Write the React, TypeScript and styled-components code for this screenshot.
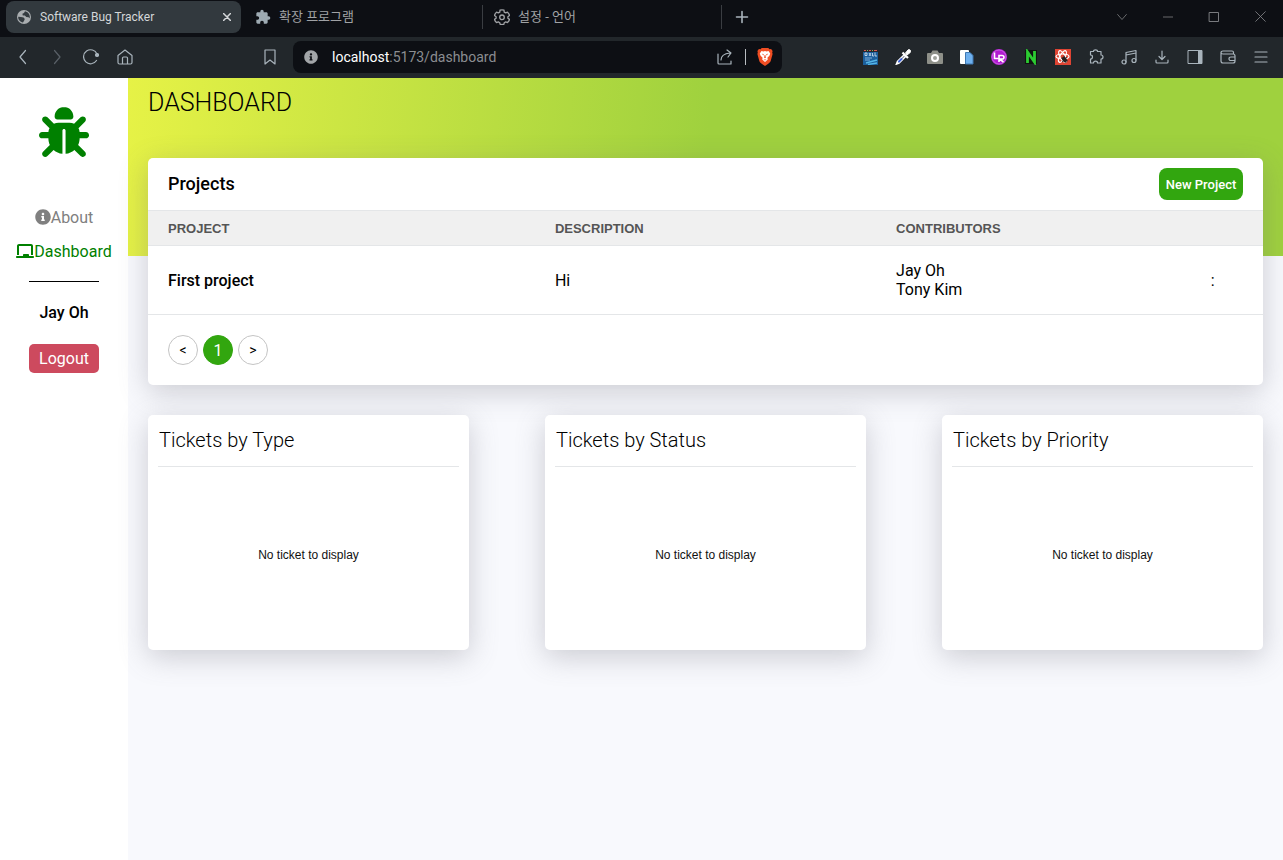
import React from "react";
import styled, { createGlobalStyle } from "styled-components";
import { FaInfoCircle } from "react-icons/fa";
import { FaBug, FaChalkboard } from "react-icons/fa6";
import { MdExtension } from "react-icons/md";

const GlobalStyle = createGlobalStyle`
  *, *::before, *::after { box-sizing: border-box; }
  html, body, #root { min-height: 100vh; }
  body { margin: 0; font-family: Roboto, sans-serif; font-size: 16px; color: #000; background: #f8f9fd; }
  button { font-family: inherit; padding: 0; border: 0; background: none; cursor: pointer; }
  h1, h2, p { margin: 0; }
  a { text-decoration: none; }
  svg { display: block; flex: none; }
`;

const Shell = styled.div`
  min-height: 100vh;
  display: flex;
  flex-direction: column;
`;

/* Browser frame */
const TabStrip = styled.header`
  display: flex;
  align-items: center;
  height: 37px;
  padding: 0 0 4px 5px;
  background: #0d0f14;
  color: #a3a7ab;
`;
const Tab = styled.div<{ $active?: boolean }>`
  display: flex;
  align-items: center;
  gap: 8px;
  flex: 0 1 ${(p) => (p.$active ? 235 : 236)}px;
  height: 32px;
  margin: 0 ${(p) => (p.$active ? 3 : 1)}px 0 1px;
  padding: 0 10px;
  border-radius: 8px;
  white-space: nowrap;
  background: ${(p) => (p.$active ? "#32393e" : "transparent")};
  color: ${(p) => (p.$active ? "#d4d7d9" : "#a0a2a5")};
`;
const TabTitle = styled.span`
  flex: 1;
  font: 12px Roboto, sans-serif;
  &:lang(ko) { font: 13px/16px Roboto, "Noto Sans CJK KR", sans-serif; }
`;
const TabDivider = styled.span`
  width: 1px;
  height: 24px;
  background: #3a3d42;
`;
const IconButton = styled.button<{ $w?: number; $dim?: boolean }>`
  display: flex;
  align-items: center;
  justify-content: center;
  flex: none;
  width: ${(p) => p.$w ?? 34}px;
  height: 32px;
  color: ${(p) => (p.$dim ? "#596067" : "#a9b4bc")};
`;
const CloseTab = styled(IconButton)`
  color: #d4d7d9;
`;
const WindowControls = styled.div`
  display: flex;
  margin-left: auto;
  & > button { color: #85878a; }
`;
const Toolbar = styled.div`
  display: flex;
  align-items: center;
  height: 41px;
  padding: 0 6px 1px;
  background: #22272b;
`;
const ToolGroup = styled.div<{ $end?: boolean }>`
  display: flex;
  align-items: center;
  margin-left: ${(p) => (p.$end ? "auto" : "0")};
`;
const AddressGroup = styled.div`
  display: flex;
  align-items: center;
  flex: 0 1 529px;
  margin-left: 111px;
`;
const AddressBar = styled.div`
  display: flex;
  align-items: center;
  flex: 1;
  height: 32px;
  margin-left: 6px;
  padding-left: 11px;
  border-radius: 8px;
  background: #0d0f14;
  color: #8b8d91;
  font: 14px Roboto, sans-serif;
`;
const Url = styled.p`
  flex: 1;
  padding-left: 14px;
  & > strong { font-weight: 400; color: #fff; }
`;
const AddressDivider = styled.span`
  width: 1px;
  height: 16px;
  margin: 0 2px 0 3px;
  background: #b9bdc1;
`;

/* Application */
const Body = styled.div`
  flex: 1;
  display: flex;
`;
const Sidebar = styled.aside`
  flex: 0 0 128px;
  display: flex;
  flex-direction: column;
  align-items: center;
  padding-top: 29px;
  background: #fff;
`;
const Nav = styled.nav`
  display: flex;
  flex-direction: column;
  align-items: center;
  gap: 14px;
  margin-top: 50px;
`;
const NavLink = styled.a<{ $active?: boolean }>`
  display: flex;
  align-items: center;
  height: 20px;
  color: ${(p) => (p.$active ? "#008000" : "#808080")};
`;
const BoardIcon = styled(FaChalkboard)`
  width: 18px;
  height: 16px;
`;
const Rule = styled.hr`
  width: 70px;
  margin: 20px 0 21px;
  border: 0;
  border-top: 1px solid #000;
`;
const UserName = styled.p`
  font-weight: 500;
  line-height: 20px;
`;
const LogoutButton = styled.button`
  width: 70px;
  height: 29px;
  margin-top: 21px;
  border-radius: 5px;
  background: #cd4a5e;
  color: #fff;
  font-size: 16px;
`;
const Main = styled.main`
  flex: 1;
  min-width: 0;
  padding: 10px 20px 30px;
  background:
    linear-gradient(95deg, #e6f246 0%, #9fd13e 50%) top / 100% 178px no-repeat,
    #f8f9fd;
`;
const PageTitle = styled.h1`
  font-size: 25px;
  font-weight: 300;
  line-height: 30px;
`;
const Card = styled.section`
  border-radius: 5px;
  background: #fff;
  box-shadow: 0 7px 29px rgba(100, 100, 111, 0.3);
`;
const ProjectsCard = styled(Card)`
  margin-top: 40px;
`;
const CardHeader = styled.div`
  display: flex;
  align-items: center;
  justify-content: space-between;
  height: 52px;
  padding: 0 20px;
`;
const CardTitle = styled.h2`
  font-size: 18px;
  font-weight: 500;
  line-height: 20px;
`;
const NewButton = styled.button`
  height: 32px;
  min-width: 84px;
  border-radius: 8px;
  background: #32a60f;
  color: #fff;
  font-size: 13px;
  font-weight: 500;
`;
const Table = styled.table`
  width: 100%;
  table-layout: fixed;
  border-collapse: collapse;
  text-align: left;
`;
const Col = styled.col<{ $w: string }>`
  width: ${(p) => p.$w};
`;
const Th = styled.th`
  height: 35px;
  padding: 0 0 0 20px;
  border: solid #e4e6e8;
  border-width: 1px 0;
  background: #f0f0f0;
  color: #555;
  font: 700 13px "Liberation Sans", sans-serif;
`;
const Td = styled.td<{ $strong?: boolean }>`
  height: 69px;
  padding: 0 0 0 20px;
  border-bottom: 1px solid #e4e6e8;
  font-weight: ${(p) => (p.$strong ? 500 : 400)};
  line-height: 19px;
`;
const RowMenu = styled.button`
  width: 20px;
  height: 30px;
  font-size: 16px;
`;
const Pager = styled.nav`
  display: flex;
  gap: 5px;
  padding: 20px;
`;
const PageButton = styled.button<{ $current?: boolean }>`
  width: 30px;
  height: 30px;
  border: 1px solid ${(p) => (p.$current ? "#32a60f" : "#c4c4c4")};
  border-radius: 50%;
  background: ${(p) => (p.$current ? "#32a60f" : "#fff")};
  color: ${(p) => (p.$current ? "#fff" : "#000")};
  font-size: ${(p) => (p.$current ? 16 : 14)}px;
`;
const Charts = styled.div`
  display: flex;
  justify-content: space-between;
  gap: 20px;
  margin-top: 30px;
`;
const ChartCard = styled(Card)`
  flex: 0 1 321px;
  display: flex;
  flex-direction: column;
  min-height: 235px;
  padding: 10px;
`;
const ChartTitle = styled.h2`
  height: 42px;
  padding-left: 1px;
  border-bottom: 1px solid #e4e6e8;
  font-size: 20px;
  font-weight: 300;
  line-height: 30px;
`;
const Empty = styled.p`
  flex: 1;
  display: flex;
  align-items: center;
  justify-content: center;
  padding-top: 2px;
  color: #111;
  font: 12px "Liberation Sans", sans-serif;
`;

type IconProps = { size?: number; width?: number; children: React.ReactNode };
const Line = ({ size = 16, width = 1.2, children }: IconProps) => (
  <svg width={size} height={size} viewBox="0 0 16 16" fill="none" stroke="currentColor" strokeWidth={width} strokeLinecap="round" strokeLinejoin="round" aria-hidden="true">
    {children}
  </svg>
);

const GlobeIcon = () => (
  <svg width="16" height="16" viewBox="0 0 16 16" aria-hidden="true">
    <circle cx="8" cy="8" r="7" fill="#a9adb0" />
    <path d="M2.2 7.8 5 8l2.600.6 1.200 1.400-.6 1.600-1.200 1.800C4.200 13 2 11 2.200 7.800ZM9 2.200 8 4 6.400 4.800l.4 1.600 2 .2 1.500 1.400 2.200.2 1.200 1c.7-3-1-6-4.700-7Z" fill="#343b40" />
  </svg>
);
const GearIcon = () => (
  <Line width={1.3}>
    <path d="M6 1.200q2-.8 4 0l.2 1.900 1.500.8 1.800-.7q1.600 1.300 2 3.300L13.900 7.700v1.600l1.600 1.100q-.5 2-2 3.200l-1.800-.7-1.500.8-.2 1.500q-2 .8-4 0l-.2-1.500-1.500-.8-1.800.7q-1.500-1.200-2-3.200l1.600-1.100V7.700L.5 6.500q.4-2 2-3.300l1.800.7 1.500-.8Z" />
    <circle cx="8" cy="8.300" r="2.300" />
  </Line>
);
const BraveIcon = () => (
  <svg width="16" height="18" viewBox="0 0 16 18" aria-hidden="true">
    <path d="M4.7 0h6.600l1.200 1.300 1.600-.2L15.600 3l-.4 1.500.4 1.400-2 7.400c-.4 1.200-3.200 3.300-5.600 4.700-2.400-1.400-5.200-3.500-5.600-4.700L.4 5.900l.4-1.400L.4 3l1.500-1.900 1.600.2Z" fill="#f04e23" />
    <path d="m4.500 3 2 .5L8 3l1.500.5 2-.5L13.200 5.600l-.8 2.200-2 2 .4 1.700L8 14l-2.800-2.500.4-1.700-2-2-.8-2.200Z" fill="#fff" />
    <path d="m4.800 5.600 2.200.9-.7 1ZM11.200 5.600 9 6.500l.7 1ZM7.600 7h.8l.5 2.700L8 10.300l-.9-.6ZM6.500 11.500h3L8 12.500Z" fill="#f04e23" />
  </svg>
);

const extensions: { label: string; icon: React.ReactNode }[] = [
  { label: "Dictionary", icon: <svg width="16" height="16" viewBox="0 0 16 16"><path d="M0 1h15v15H0Z" fill="#1c5f9c" /><path d="M0 0h15v3H0Z" fill="#27262c" /><path d="M1 1.500h2M6 1.500h2M11 1.500h3" stroke="#d35b55" /><path d="M4 1.500h1M9 1.500h1" stroke="#6fbf5f" /><path d="M2 4v2.500h2V4ZM6 4l2 3M8 4 6 7M9.500 4v3h1.500M12 3.500V7h2" fill="none" stroke="#dbe7f2" strokeWidth=".8" /><path d="M2 9h7M2 11h5" stroke="#7fb0d9" /><path d="m3 14 11-3M5 15.500l9-1.500" stroke="#55b6e6" strokeWidth="1.300" /></svg> },
  { label: "Color picker", icon: <svg width="16" height="16" viewBox="0 0 16 16"><path d="M10.500 4 13 1q1-1 2.200.2t0 2.300L12 6Z" fill="#fff" stroke="#fff" /><path d="m7.500 3.500 5.500 5.500" stroke="#fff" strokeWidth="2.200" /><path d="m9 6-6.500 6.500L1.500 15l2.500-1L10.500 7.500Z" fill="#22304f" stroke="#fff" strokeWidth="1.600" /><path d="m7 9.500-3.500 3.500" stroke="#3d62d8" strokeWidth="2" /></svg> },
  { label: "Screenshot", icon: <svg width="16" height="16" viewBox="0 0 16 16"><path d="M1 4h3l1.500-2.500h5L12 4h3q1 0 1 1v9q0 1-1 1H1q-1 0-1-1V5q0-1 1-1Z" fill="#8e9089" /><circle cx="8" cy="9" r="3" fill="#a0a29c" stroke="#fff" strokeWidth="2" /></svg> },
  { label: "Copy", icon: <svg width="16" height="16" viewBox="0 0 16 16"><rect x="1" y="1" width="9" height="14" rx="1" fill="#fff" /><path d="M6.500 3.500H11l3 3V15H6.500Z" fill="#6fb0ee" stroke="#3e78b3" /></svg> },
  { label: "Live reload", icon: <svg width="16" height="16" viewBox="0 0 16 16"><circle cx="8" cy="8" r="8" fill="#b21bd2" /><circle cx="8" cy="8" r="7" fill="none" stroke="#d37be6" strokeWidth=".7" /><path d="M3.500 3.500v6H7M8 13V6.500h3q2 0 2 1.800t-2 1.700H8.500l4 3" fill="none" stroke="#fff" strokeWidth="1.600" /></svg> },
  { label: "Notes", icon: <svg width="16" height="16" viewBox="0 0 16 16"><path d="M2 1h12v14H2Z" fill="#101411" /><path d="M4.500 14V3l7 10V2" fill="none" stroke="#2ccc32" strokeWidth="2.800" /></svg> },
  { label: "React tools", icon: <svg width="16" height="16" viewBox="0 0 16 16"><path d="M0 0h16v16H0Z" fill="#df4433" /><g fill="none" stroke="#fff" strokeWidth="1.200"><ellipse cx="7.500" cy="7.500" rx="6.500" ry="2.500" /><ellipse cx="7.500" cy="7.500" rx="6.500" ry="2.500" transform="rotate(60 7.500 7.500)" /><ellipse cx="7.500" cy="7.500" rx="6.500" ry="2.500" transform="rotate(120 7.500 7.500)" /></g><ellipse cx="9.500" cy="10.500" rx="2.200" ry="3" fill="#282020" transform="rotate(-35 9.500 10.500)" /><path d="m6 9 7 3M9 6.500l2 7.500M7 13l5-5" stroke="#282020" strokeWidth=".8" /></svg> },
  { label: "Extensions", icon: <Line><path d="M2.500 2.500h3q0-1.700 2-1.700t2 1.700H13V6q2 0 2 2t-2 2v4H9.500q0-1.800-2-1.800t-2 1.800h-3v-4q2 0 2-2t-2-2Z" /></Line> },
  { label: "Media", icon: <Line><path d="M5 13V3.500l10-2V11M5 6l10-2" /><circle cx="3" cy="13" r="2" /><circle cx="13" cy="11.500" r="2" /></Line> },
  { label: "Downloads", icon: <Line><path d="M8 2v8.500M5 7.500l3 3 3-3M2 11v2q0 1 1 1h10q1 0 1-1v-2" /></Line> },
  { label: "Side panel", icon: <svg width="16" height="16" viewBox="0 0 16 16"><path d="M1 1.500h14v13H1Z" fill="none" stroke="currentColor" /><path d="M11 1h4v14h-4Z" fill="currentColor" /></svg> },
  { label: "Wallet", icon: <Line><path d="M13.500 5V3.500q0-1.500-1.500-1.500H3Q1 2 1 3.500T3 5h10q2 0 2 2v5q0 2-2 2H3q-2 0-2-2V3.500M15 8h-4q-2 0-2 1.800t2 1.700h4" /></Line> },
  { label: "Menu", icon: <Line><path d="M2 3h12M2 8h12M2 13h12" /></Line> },
];

const charts = ["Type", "Status", "Priority"];

export default function App() {
  return (
    <Shell>
      <GlobalStyle />
      <TabStrip>
        <Tab $active>
          <GlobeIcon />
          <TabTitle>Software Bug Tracker</TabTitle>
          <CloseTab $w={8} aria-label="Close tab"><Line size={8} width={3}><path d="m1 1 14 14M15 1 1 15" /></Line></CloseTab>
        </Tab>
        <Tab>
          <MdExtension size={16} color="#9eabb3" />
          <TabTitle lang="ko">확장 프로그램</TabTitle>
        </Tab>
        <TabDivider />
        <Tab>
          <GearIcon />
          <TabTitle lang="ko">설정 - 언어</TabTitle>
        </Tab>
        <TabDivider />
        <IconButton $w={40} aria-label="New tab"><Line width={1.6}><path d="M8 2.500v11M2.500 8h11" /></Line></IconButton>
        <WindowControls>
          <IconButton $w={46} aria-label="Search tabs"><Line size={10}><path d="m1 4 7 8 7-8" /></Line></IconButton>
          <IconButton $w={46} aria-label="Minimize"><Line size={10}><path d="M0 8h16" /></Line></IconButton>
          <IconButton $w={46} aria-label="Maximize"><Line size={12}><path d="M2 2h12v12H2Z" /></Line></IconButton>
          <IconButton $w={46} aria-label="Close"><Line size={11}><path d="m1 1 14 14M15 1 1 15" /></Line></IconButton>
        </WindowControls>
      </TabStrip>
      <Toolbar>
        <ToolGroup>
          <IconButton aria-label="Back"><Line><path d="M10.500 1.500 5 8l5.500 6.500" /></Line></IconButton>
          <IconButton $dim aria-label="Forward"><Line><path d="M5.500 1.500 11 8l-5.500 6.500" /></Line></IconButton>
          <IconButton aria-label="Reload"><Line><path d="M13.500 11.500A7 7 0 1 1 14 5" /><circle cx="14" cy="6" r="1.500" fill="currentColor" /></Line></IconButton>
          <IconButton aria-label="Home"><Line><path d="M1 6.500v7q0 1.500 1.500 1.500h11q1.500 0 1.500-1.500v-7L8 1ZM5.500 15V9q0-1 1-1h3q1 0 1 1v6" /></Line></IconButton>
        </ToolGroup>
        <AddressGroup>
          <IconButton aria-label="Bookmark"><Line><path d="M3 1h10v14l-5-4-5 4Z" /></Line></IconButton>
          <AddressBar>
            <FaInfoCircle size={14} color="#a2a5a8" />
            <Url><strong>localhost</strong>:5173/dashboard</Url>
            <IconButton aria-label="Share"><Line><path d="M1 5v9q0 1 1 1h12v-3M4 11q0-6 9-7M10 1l4 3-3 4" /></Line></IconButton>
            <AddressDivider />
            <IconButton aria-label="Brave Shields"><BraveIcon /></IconButton>
          </AddressBar>
        </AddressGroup>
        <ToolGroup $end>
          {extensions.map((e, i) => (
            <IconButton key={e.label} $w={i < 7 ? 32 : 33} aria-label={e.label}>{e.icon}</IconButton>
          ))}
        </ToolGroup>
      </Toolbar>
      <Body>
        <Sidebar>
          <FaBug size={50} color="#008000" aria-label="Bug Tracker" />
          <Nav>
            <NavLink href="#about"><FaInfoCircle size={16} />About</NavLink>
            <NavLink href="#dashboard" $active><BoardIcon />Dashboard</NavLink>
          </Nav>
          <Rule />
          <UserName>Jay Oh</UserName>
          <LogoutButton>Logout</LogoutButton>
        </Sidebar>
        <Main>
          <PageTitle>DASHBOARD</PageTitle>
          <ProjectsCard>
            <CardHeader>
              <CardTitle>Projects</CardTitle>
              <NewButton>New Project</NewButton>
            </CardHeader>
            <Table>
              <colgroup>
                <Col $w="34.7%" />
                <Col $w="30.6%" />
                <Col $w="27.5%" />
                <Col $w="7.2%" />
              </colgroup>
              <thead>
                <tr>
                  <Th>PROJECT</Th>
                  <Th>DESCRIPTION</Th>
                  <Th>CONTRIBUTORS</Th>
                  <Th aria-label="Actions" />
                </tr>
              </thead>
              <tbody>
                <tr>
                  <Td $strong>First project</Td>
                  <Td>Hi</Td>
                  <Td>Jay Oh<br />Tony Kim</Td>
                  <Td><RowMenu aria-label="Project menu">:</RowMenu></Td>
                </tr>
              </tbody>
            </Table>
            <Pager aria-label="Pages">
              <PageButton>&lt;</PageButton>
              <PageButton $current>1</PageButton>
              <PageButton>&gt;</PageButton>
            </Pager>
          </ProjectsCard>
          <Charts>
            {charts.map((name) => (
              <ChartCard key={name}>
                <ChartTitle>Tickets by {name}</ChartTitle>
                <Empty>No ticket to display</Empty>
              </ChartCard>
            ))}
          </Charts>
        </Main>
      </Body>
    </Shell>
  );
}
